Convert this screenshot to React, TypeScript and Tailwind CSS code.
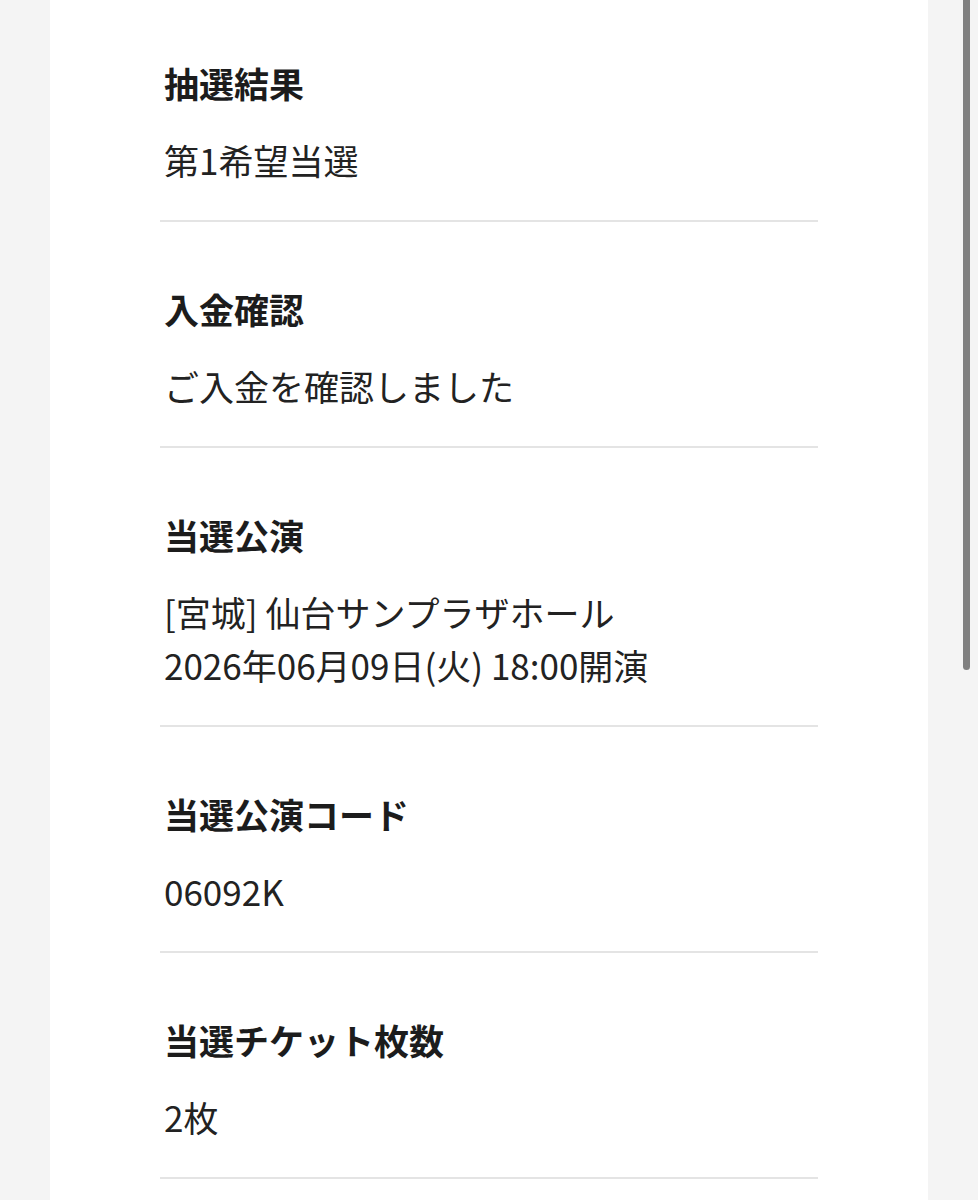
import React from "react";

type Row = { label: string; values: string[] };

const rows: Row[] = [
  { label: "抽選結果", values: ["第1希望当選"] },
  { label: "入金確認", values: ["ご入金を確認しました"] },
  {
    label: "当選公演",
    values: ["[宮城] 仙台サンプラザホール", "2026年06月09日(火) 18:00開演"],
  },
  { label: "当選公演コード", values: ["06092K"] },
  { label: "当選チケット枚数", values: ["2枚"] },
];

function InfoRow({ row, first }: { row: Row; first: boolean }) {
  return (
    <div
      className={`${first ? "pt-[58px]" : "pt-[62px]"} pb-[34px] border-b-2 border-[#e4e4e4]`}
    >
      <div className="pl-[4px] text-[35px] leading-[50px] font-bold text-[#1c1c1c]">
        {row.label}
      </div>
      <div className="mt-[25px] pl-[4px] text-[35px] leading-[53px] font-normal text-[#222222]">
        {row.values.map((v) => (
          <div key={v}>{v}</div>
        ))}
      </div>
    </div>
  );
}

export default function App() {
  return (
    <div
      className="relative min-h-[1200px] w-full bg-[#f4f4f4] overflow-hidden"
      style={{ fontFamily: '"Noto Sans CJK JP", "Noto Sans", sans-serif' }}
    >
      <div className="mx-[50px] min-h-[1200px] bg-white px-[110px]">
        {rows.map((row, i) => (
          <InfoRow key={row.label} row={row} first={i === 0} />
        ))}
      </div>
      {/* overlay scrollbar thumb */}
      <div className="absolute right-[8px] top-0 h-[670px] w-[7px] rounded-b-full bg-[#808080]" />
    </div>
  );
}
